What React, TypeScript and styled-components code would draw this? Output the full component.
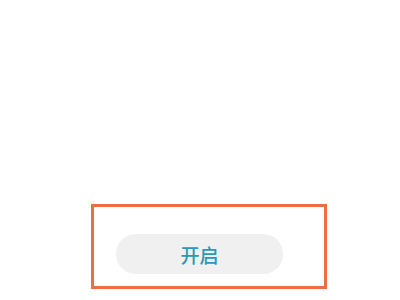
import React from "react";
import styled, { createGlobalStyle } from "styled-components";

const Global = createGlobalStyle`
  html, body { margin: 0; padding: 0; background: #ffffff; }
  body { font-family: "Noto Sans CJK SC", "Noto Sans", sans-serif; }
`;

const Page = styled.div`
  width: 400px;
  height: 300px;
  box-sizing: border-box;
  padding: 204px 0 0 91px;
  background: #ffffff;
`;

const Frame = styled.div`
  width: 236px;
  height: 85px;
  box-sizing: border-box;
  border: 3px solid #ee6d45;
  padding: 27px 0 0 22px;
`;

const PillButton = styled.button`
  width: 167px;
  height: 40px;
  border: none;
  border-radius: 20px;
  background: #f0f0f0;
  color: #2a99b8;
  font-family: "Noto Sans CJK SC", sans-serif;
  font-size: 19px;
  font-weight: 500;
  display: flex;
  align-items: center;
  justify-content: center;
  padding: 0;
  cursor: pointer;
`;

export default function App() {
  return (
    <>
      <Global />
      <Page>
        <Frame>
          <PillButton>开启</PillButton>
        </Frame>
      </Page>
    </>
  );
}
